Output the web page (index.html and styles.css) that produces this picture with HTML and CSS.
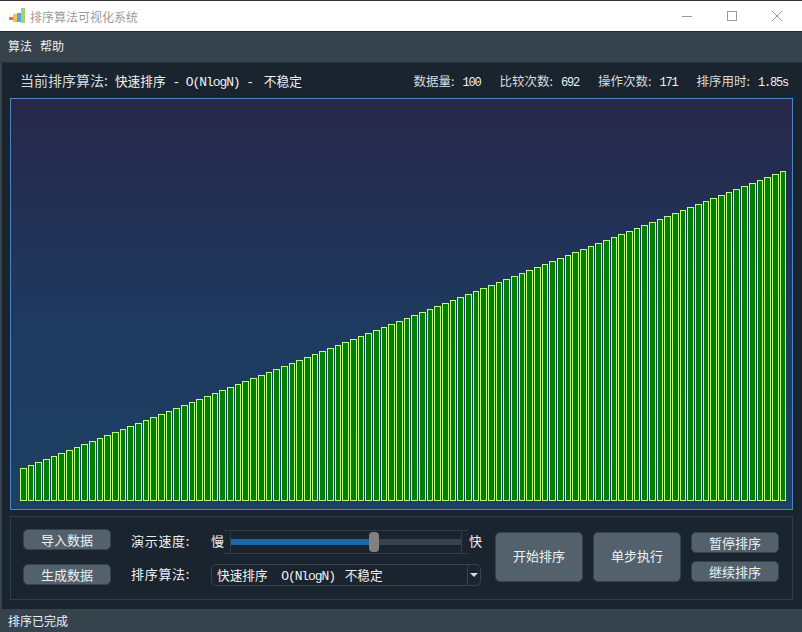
FILE: index.html
```html
<!DOCTYPE html>
<html lang="zh-CN">
<head>
    <meta charset="UTF-8">
    <title>排序算法可视化系统</title>
    <link rel="stylesheet" href="styles.css">
</head>
<body>
    <div class="window">
        <div class="titlebar">
            <svg class="app-icon" width="16" height="16" viewBox="0 0 16 16">
                <rect x="0" y="9" width="4" height="3" fill="#f06060"/>
                <rect x="4" y="6" width="4" height="8" fill="#ffc040"/>
                <rect x="8" y="5" width="4" height="9" fill="#50a8e8"/>
                <rect x="12" y="0" width="4" height="15" fill="#a8d070"/>
            </svg>
            <span class="app-title">排序算法可视化系统</span>
            <div class="win-buttons">
                <svg width="12" height="12" viewBox="0 0 12 12"><path d="M1 6.5H11" stroke="#9a9a9a" fill="none"/></svg>
                <svg width="12" height="12" viewBox="0 0 12 12"><rect x="1.5" y="1.5" width="9" height="9" stroke="#9a9a9a" fill="none"/></svg>
                <svg width="12" height="12" viewBox="0 0 12 12"><path d="M1 1L11 11M11 1L1 11" stroke="#9a9a9a" fill="none"/></svg>
            </div>
        </div>
        <div class="menubar">
            <span class="menu-item">算法</span>
            <span class="menu-item">帮助</span>
        </div>
        <div class="content">
            <div class="info-row">
                <span class="info-label">当前排序算法:</span>
                <span class="algo-name">快速排序<span class="latin"> - O(NlogN) - </span>不稳定</span>
                <div class="stats">
                    <span class="stat"><span class="stat-label">数据量:</span><span class="latin stat-value">100</span></span>
                    <span class="stat"><span class="stat-label">比较次数:</span><span class="latin stat-value">692</span></span>
                    <span class="stat"><span class="stat-label">操作次数:</span><span class="latin stat-value">171</span></span>
                    <span class="stat"><span class="stat-label">排序用时:</span><span class="latin stat-value">1.85s</span></span>
                </div>
            </div>
            <div class="chart" id="chart"></div>
            <div class="panel">
                <div class="btn-col wide-gap">
                    <button class="btn small">导入数据</button>
                    <button class="btn small">生成数据</button>
                </div>
                <div class="settings">
                    <span class="set-label">演示速度:</span>
                    <div class="speed">
                        <span class="speed-end">慢</span>
                        <div class="slider">
                            <div class="slider-inner">
                                <div class="groove">
                                    <div class="groove-fill"></div>
                                    <div class="handle"></div>
                                </div>
                            </div>
                        </div>
                        <span class="speed-end">快</span>
                    </div>
                    <span class="set-label">排序算法:</span>
                    <div class="combo">
                        <span class="combo-text">快速排序<span class="latin">  O(NlogN) </span>不稳定</span>
                        <span class="combo-arrow"></span>
                    </div>
                </div>
                <button class="btn big">开始排序</button>
                <button class="btn big">单步执行</button>
                <div class="btn-col">
                    <button class="btn small">暂停排序</button>
                    <button class="btn small">继续排序</button>
                </div>
            </div>
        </div>
        <div class="statusbar">排序已完成</div>
    </div>
    <script src="script.js"></script>
</body>
</html>
```

FILE: styles.css
```css
* {
    box-sizing: border-box;
}
body {
    margin: 0;
    background-color: #1a242e;
    font-family: "Noto Sans CJK SC", "Liberation Sans", sans-serif;
    font-size: 13px;
    color: #eef1f3;
}
.window {
    display: flex;
    flex-direction: column;
    width: 802px;
    height: 632px;
    overflow: hidden;
    background-color: #36434d;
}
.titlebar {
    display: flex;
    align-items: center;
    height: 32px;
    flex: none;
    padding: 0 19px 0 9px;
    background-color: #fff;
    border-top: 1px solid #3a3030;
    border-bottom: 1px solid #1f2a33;
}
.app-icon {
    margin-right: 5px;
}
.app-title {
    font-size: 12px;
    color: #9b9b9b;
}
.win-buttons {
    display: flex;
    gap: 33px;
    margin-left: auto;
}
.menubar {
    display: flex;
    gap: 8px;
    align-items: center;
    height: 31px;
    flex: none;
    padding: 0 0 3px 8px;
    background-color: #36434d;
    border-bottom: 1px solid #27333c;
    font-size: 12px;
}
.content {
    display: flex;
    flex-direction: column;
    flex: 1;
    margin-left: 2px;
    padding: 0 9px 9px 8px;
    background-color: #1a242e;
}
.info-row {
    display: flex;
    align-items: center;
    height: 35px;
    flex: none;
    padding: 0 5px 1px 10px;
}
.info-label {
    font-size: 14px;
    color: #d6dbdf;
}
.algo-name {
    margin-left: 7px;
    font-size: 12.7px;
}
.latin {
    font-family: "Liberation Mono", monospace;
    font-size: 13px;
    letter-spacing: -1.08px;
    white-space: pre;
}
.algo-name .latin {
    margin-right: 4px;
}
.combo-text .latin {
    margin-right: 3px;
}
.stats {
    display: flex;
    gap: 19px;
    margin-left: auto;
}
.stat {
    display: flex;
    align-items: baseline;
    gap: 8px;
}
.stat-label {
    font-size: 12.5px;
    color: #d6dbdf;
}
.stat-value {
    font-size: 12px;
    letter-spacing: -1.2px;
}
.chart {
    display: flex;
    align-items: flex-end;
    gap: 1px;
    height: 412px;
    flex: none;
    padding: 0 6px 8px 9px;
    border: 1px solid #4a86c8;
    background: linear-gradient(#272749, #1e3a60 55%, #1d4062);
}
.bar {
    flex: 1;
    background-color: #008000;
    border: 1px solid #c0ff80;
}
.panel {
    display: flex;
    align-items: center;
    gap: 10px;
    height: 84px;
    flex: none;
    margin-top: 6px;
    padding: 0 12px 2px;
    border: 1px solid #2f3d48;
}
.btn-col {
    display: flex;
    flex-direction: column;
    gap: 8px;
}
.wide-gap {
    gap: 14px;
}
.btn {
    width: 88px;
    background-color: #52616c;
    border: 1px solid #36434d;
    border-radius: 5px;
    color: #eef1f3;
    font-family: inherit;
    font-size: 13px;
}
.small {
    height: 21px;
    padding: 0 0 6px;
}
.big {
    height: 50px;
    padding: 0 0 3px;
}
.settings {
    display: grid;
    grid-template-columns: 80px 270px;
    grid-template-rows: 24px 22px;
    row-gap: 10px;
    align-items: center;
    margin: 2px 4px 0 10px;
}
.set-label {
    padding-bottom: 3px;
    font-size: 13px;
    letter-spacing: 0.7px;
}
.speed {
    display: flex;
    align-items: center;
    font-size: 13px;
}
.speed-end {
    flex: none;
    padding-bottom: 3px;
}
.slider {
    flex: none;
    width: 244px;
    height: 24px;
    margin-right: 1px;
    padding: 0 6px;
    border-top: 1px solid #2f3d48;
    border-bottom: 1px solid #2f3d48;
}
.slider-inner {
    display: flex;
    align-items: center;
    height: 100%;
    border-left: 1px solid #2f3d48;
    border-right: 1px solid #2f3d48;
}
.groove {
    position: relative;
    flex: 1;
    height: 6px;
    background-color: #36434d;
}
.groove-fill {
    width: 60%;
    height: 100%;
    background-color: #1768a8;
}
.handle {
    position: absolute;
    left: 138px;
    top: -7px;
    width: 10px;
    height: 20px;
    background-color: #808080;
    border-radius: 4px;
}
.combo {
    display: flex;
    align-items: center;
    height: 22px;
    border: 1px solid #36434d;
    border-radius: 5px;
}
.combo-text {
    flex: 1;
    padding: 0 0 2px 5px;
    font-size: 12.7px;
}
.combo-arrow {
    position: relative;
    width: 13px;
    height: 100%;
    border-left: 1px solid #36434d;
}
.combo-arrow::after {
    content: "";
    position: absolute;
    left: 2px;
    top: 8px;
    border-left: 4px solid transparent;
    border-right: 4px solid transparent;
    border-top: 4px solid #d6dbdf;
}
.statusbar {
    display: flex;
    align-items: center;
    height: 24px;
    flex: none;
    padding: 0 0 2px 8px;
    background-color: #36434d;
    font-size: 12px;
}
```

FILE: script.js
```js
const chart = document.getElementById('chart');

// sorted result: 100 bars growing 3px each
for (let i = 0; i < 100; i++) {
  const bar = document.createElement('div');
  bar.className = 'bar';
  bar.style.height = (33 + i * 3) + 'px';
  chart.appendChild(bar);
}
```
